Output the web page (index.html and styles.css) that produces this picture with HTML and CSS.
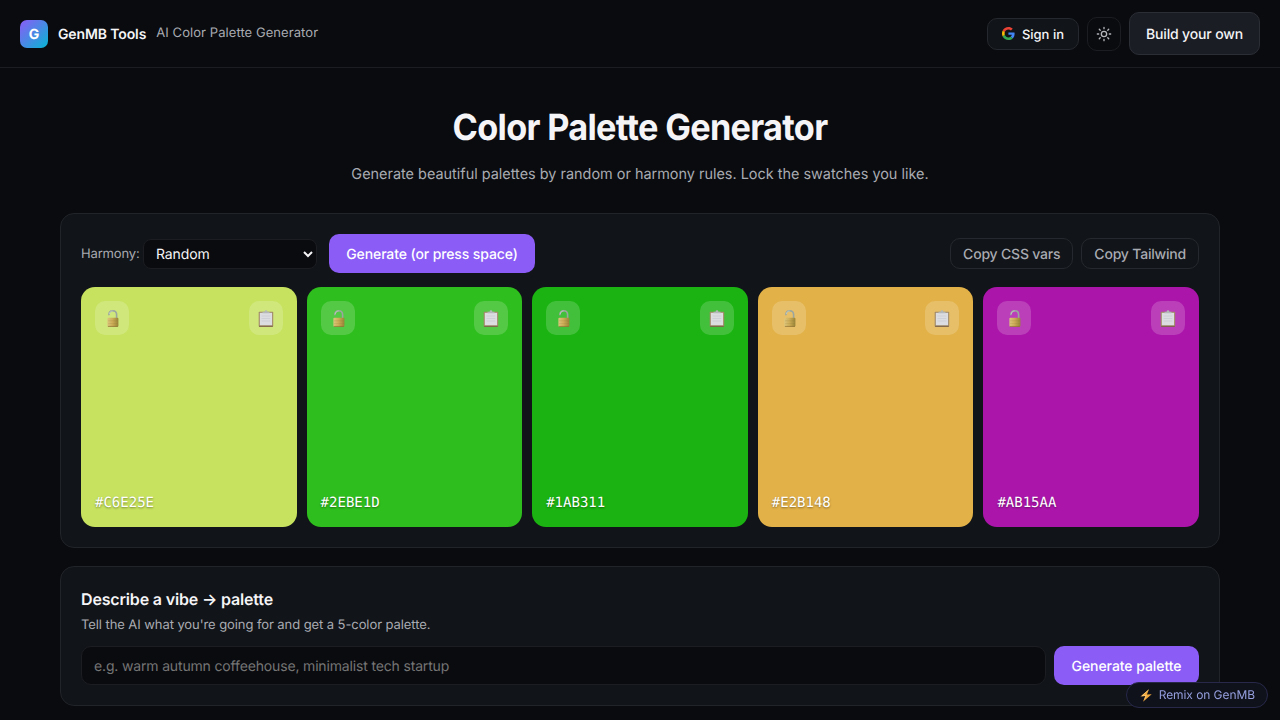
FILE: index.html
```html
<!DOCTYPE html>
<html lang="en">
<head>
<meta charset="utf-8">
<title>AI Color Palette Generator</title>
<link rel="stylesheet" href="styles.css">
</head>
<body>
<svg class="defs" width="0" height="0" aria-hidden="true">
  <defs>
    <linearGradient id="brass" x1="0" y1="0" x2="1" y2="0"><stop offset="0" stop-color="#dcc67c"/><stop offset="0.45" stop-color="#cfae58"/><stop offset="1" stop-color="#988437"/></linearGradient>
    <symbol id="lock" viewBox="0 0 18 18">
      <path d="M5.9 6.2V5.4C5.9 3.2 7.3 1.7 9.6 1.7s4 1.6 4 3.9v4" fill="none" stroke="#9ba69f" stroke-width="1.6"/>
      <path d="M6.2 5.2C6.4 3.4 7.7 2 9.6 2" fill="none" stroke="#ccd6ce" stroke-width="0.7"/>
      <rect x="4.4" y="8.8" width="11" height="8.9" rx="1" fill="url(#brass)"/>
      <path d="M5 11.8h10M5 14.6h10" stroke="#8b7536" stroke-opacity="0.3" stroke-width="0.6"/>
      <path d="M4.9 17.4h10" stroke="#8b6b2f" stroke-width="0.7"/>
    </symbol>
    <symbol id="clip" viewBox="0 0 18 18">
      <rect x="1.7" y="2.8" width="14.5" height="15" rx="0.8" fill="#a08865"/>
      <rect x="2.8" y="3.8" width="12.3" height="12.5" fill="#dcdde1"/>
      <path d="M4.5 7h8.8M4.5 9.5h8.8M4.5 12h8.8" stroke="#c5c8d0" stroke-width="0.6"/>
      <path d="M5.5 4.2V2.7h2.1a1.4 1.4 0 0 1 2.8 0h2.1v1.5z" fill="#b4b8b8"/>
      <path d="M2.1 17.4h13.7" stroke="#755942" stroke-width="0.8"/>
    </symbol>
  </defs>
</svg>
<header class="topbar">
  <div class="brand">
    <span class="logo">G</span>
    <span class="brand-name">GenMB Tools</span>
    <span class="brand-sub">AI Color Palette Generator</span>
  </div>
  <div class="actions">
    <button class="signin">
      <svg width="13" height="13" viewBox="0 0 48 48"><path fill="#EA4335" d="M24 9.5c3.54 0 6.71 1.22 9.21 3.6l6.85-6.85C35.9 2.38 30.47 0 24 0 14.62 0 6.51 5.38 2.56 13.22l7.98 6.19C12.43 13.72 17.74 9.5 24 9.5z"/><path fill="#4285F4" d="M46.98 24.55c0-1.57-.15-3.09-.38-4.55H24v9.02h12.94c-.58 2.96-2.26 5.48-4.78 7.18l7.73 6c4.51-4.18 7.09-10.36 7.09-17.65z"/><path fill="#FBBC05" d="M10.53 28.59c-.48-1.45-.76-2.99-.76-4.59s.27-3.14.76-4.59l-7.98-6.19C.92 16.46 0 20.12 0 24s.92 7.54 2.56 10.78l7.97-6.19z"/><path fill="#34A853" d="M24 48c6.48 0 11.93-2.13 15.89-5.81l-7.73-6c-2.15 1.45-4.92 2.3-8.16 2.3-6.26 0-11.57-4.22-13.47-9.91l-7.98 6.19C6.51 42.62 14.62 48 24 48z"/></svg>
      <span class="signin-label">Sign in</span>
    </button>
    <button class="theme" aria-label="Theme">
      <svg width="16" height="16" viewBox="0 0 24 24" fill="none" stroke="currentColor" stroke-width="2" stroke-linecap="round"><circle cx="12" cy="12" r="4"/><path d="M12 2v2M12 20v2M4.93 4.93l1.41 1.41M17.66 17.66l1.41 1.41M2 12h2M20 12h2M6.34 17.66l-1.41 1.41M19.07 4.93l-1.41 1.41"/></svg>
    </button>
    <button class="build">Build your own</button>
  </div>
</header>
<main class="page">
  <h1 class="title">Color Palette Generator</h1>
  <p class="lead">Generate beautiful palettes by random or harmony rules. Lock the swatches you like.</p>
  <section class="card">
    <div class="toolbar">
      <label class="harmony"><span class="harmony-label">Harmony:</span><select class="select"><option>Random</option><option>Complementary</option></select></label>
      <button class="primary">Generate (or press space)</button>
      <div class="copy-group">
        <button class="ghost">Copy CSS vars</button>
        <button class="ghost">Copy Tailwind</button>
      </div>
    </div>
    <div class="swatches">
      <div class="swatch lime"><div class="swatch-top"><button class="chip"><svg width="18" height="18"><use href="#lock"/></svg></button><button class="chip"><svg width="18" height="18"><use href="#clip"/></svg></button></div><span class="hex">#C6E25E</span></div>
      <div class="swatch green"><div class="swatch-top"><button class="chip"><svg width="18" height="18"><use href="#lock"/></svg></button><button class="chip"><svg width="18" height="18"><use href="#clip"/></svg></button></div><span class="hex">#2EBE1D</span></div>
      <div class="swatch forest"><div class="swatch-top"><button class="chip"><svg width="18" height="18"><use href="#lock"/></svg></button><button class="chip"><svg width="18" height="18"><use href="#clip"/></svg></button></div><span class="hex">#1AB311</span></div>
      <div class="swatch amber"><div class="swatch-top"><button class="chip"><svg width="18" height="18"><use href="#lock"/></svg></button><button class="chip"><svg width="18" height="18"><use href="#clip"/></svg></button></div><span class="hex">#E2B148</span></div>
      <div class="swatch purple"><div class="swatch-top"><button class="chip"><svg width="18" height="18"><use href="#lock"/></svg></button><button class="chip"><svg width="18" height="18"><use href="#clip"/></svg></button></div><span class="hex">#AB15AA</span></div>
    </div>
  </section>
  <section class="card vibe">
    <h2 class="subtitle">Describe a vibe → palette</h2>
    <p class="hint">Tell the AI what you're going for and get a 5-color palette.</p>
    <div class="prompt">
      <input class="input" placeholder="e.g. warm autumn coffeehouse, minimalist tech startup">
      <button class="primary generate">Generate palette</button>
    </div>
  </section>
</main>
<a class="remix"><svg width="12" height="13" viewBox="0 0 12 13"><path d="M9 .2.4 7.4l4.9-.3L3 12.8l8.7-7.6-4.8.4z" fill="#f0a83c"/><path d="M8.4 1 2 6.8l4.2-.4-1.6 4" fill="none" stroke="#ffd58a" stroke-width="0.6"/></svg><span>Remix on GenMB</span></a>
</body>
</html>
```
FILE: styles.css
```css
* { box-sizing: border-box; }
html { overflow: hidden; }
body {
  margin: 0;
  height: 720px;
  overflow: hidden;
  background: #0a0b0f;
  color: #f5f5f7;
  font-family: Inter, "Liberation Sans", sans-serif;
  font-size: 15px;
  line-height: 1.5;
  text-rendering: geometricPrecision;
}
button, select, input { font-family: inherit; color: inherit; margin: 0; text-rendering: inherit; }
.defs { position: absolute; }
.topbar {
  height: 68px;
  padding: 0 20px;
  display: flex;
  align-items: center;
  justify-content: space-between;
  border-bottom: 1px solid #1b1d22;
}
.brand { display: flex; align-items: center; gap: 10px; }
.logo {
  width: 28px;
  height: 28px;
  padding-top: 1px;
  border-radius: 7px;
  display: grid;
  place-items: center;
  background: linear-gradient(135deg, #8b5cf6, #06b6d4);
  font-size: 14px;
  font-weight: 700;
  color: #fff;
}
.brand-name { padding-top: 1px; font-size: 14px; font-weight: 600; letter-spacing: -0.12px; }
.brand-sub { padding-top: 1px; font-size: 13px; letter-spacing: 0.07px; color: #a9abb2; }
.actions { display: flex; align-items: center; gap: 8px; }
.signin {
  width: 92px;
  height: 32px;
  padding: 0 14px 0 14px;
  display: flex;
  align-items: center;
  gap: 7px;
  background: #111418;
  border: 1px solid #25282e;
  border-radius: 10px;
  font-size: 13px;
  font-weight: 500;
  white-space: nowrap;
}
.signin-label { padding-top: 2px; }
.theme {
  width: 34px;
  height: 34px;
  padding: 0;
  display: grid;
  place-items: center;
  background: transparent;
  border: 1px solid #1b1d22;
  border-radius: 10px;
  color: #b4b6bc;
}
.build {
  width: 131px;
  height: 43px;
  padding: 2px 0 0;
  background: #1a1d24;
  border: 1px solid #2b2e35;
  border-radius: 10px;
  font-size: 14px;
  font-weight: 500;
  letter-spacing: -0.14px;
}
.page { width: 1160px; margin: 0 auto; padding-top: 35px; }
.title {
  margin: 0;
  font-size: 36px;
  line-height: 48px;
  font-weight: 700;
  letter-spacing: -0.02em;
  text-align: center;
  transform: scaleX(0.952);
}
.lead {
  margin: 11px 0 28px;
  font-size: 15px;
  line-height: 23px;
  text-align: center;
  color: #a9abb2;
  transform: scaleX(0.962);
}
.card {
  padding: 20px;
  background: #111418;
  border: 1px solid #212429;
  border-radius: 14px;
}
.toolbar { display: flex; align-items: center; margin-bottom: 14px; }
.harmony {
  display: flex;
  align-items: center;
  gap: 3px;
  margin-right: 12px;
  font-size: 13px;
  letter-spacing: -0.16px;
  color: #a9abb2;
}
.harmony-label { width: 59px; padding-top: 3px; white-space: nowrap; }
.select {
  width: 174px;
  height: 30px;
  padding: 1px 8px 0;
  background: #0a0b0f;
  border: 1px solid #1b1d22;
  border-radius: 8px;
  font-size: 14px;
  letter-spacing: -0.12px;
  color: #f5f5f7;
}
.primary {
  width: 206px;
  height: 39px;
  padding: 2px 0 0;
  background: #8b5cf6;
  border: 0;
  border-radius: 10px;
  font-size: 14px;
  font-weight: 500;
  letter-spacing: -0.11px;
  color: #fff;
  white-space: nowrap;
}
.generate { width: 145px; letter-spacing: -0.06px; }
.copy-group { display: flex; gap: 8px; margin-left: auto; }
.ghost {
  height: 31px;
  padding: 2px 12px 0;
  background: transparent;
  border: 1px solid #25282e;
  border-radius: 10px;
  font-size: 14px;
  font-weight: 500;
  letter-spacing: -0.2px;
  color: #a9abb2;
}
.swatches { display: grid; grid-template-columns: repeat(5, 1fr); gap: 10px; }
.swatch {
  height: 240px;
  padding: 14px 14px 13px;
  border-radius: 14px;
  display: flex;
  flex-direction: column;
  justify-content: space-between;
}
.swatch-top { display: flex; justify-content: space-between; }
.chip {
  width: 34px;
  height: 34px;
  padding: 0;
  display: grid;
  place-items: center;
  border: 0;
  border-radius: 10px;
  background: rgba(255, 255, 255, 0.18);
}
.lime { background: #c6e25e; }
.green { background: #2ebe1d; }
.forest { background: #1ab311; }
.amber { background: #e2b148; }
.purple { background: #ab15aa; }
.hex {
  font-family: "DejaVu Sans Mono", monospace;
  font-size: 14px;
  line-height: 21px;
  color: #fff;
  text-shadow: 0 1px 2px rgba(0, 0, 0, 0.4);
}
.vibe { margin-top: 18px; }
.subtitle { margin: 0; font-size: 16px; line-height: 24px; font-weight: 600; letter-spacing: -0.16px; }
.hint { margin: 4px 0 10px; font-size: 13px; line-height: 21px; letter-spacing: -0.08px; color: #a9abb2; }
.prompt { display: flex; gap: 8px; }
.input {
  flex: 1;
  height: 39px;
  padding: 2px 12px 0;
  background: #0a0b0f;
  border: 1px solid #1b1d22;
  border-radius: 10px;
  font-size: 14px;
  letter-spacing: -0.16px;
}
.input::placeholder { color: #757575; }
.remix {
  position: fixed;
  right: 12px;
  bottom: 12px;
  width: 142px;
  height: 26px;
  padding: 0 12px 0 13px;
  display: flex;
  align-items: center;
  justify-content: space-between;
  background: #0f111b;
  border: 1px solid #28294a;
  border-radius: 13px;
  font-size: 12px;
  letter-spacing: -0.07px;
  color: #959fdd;
}
```
